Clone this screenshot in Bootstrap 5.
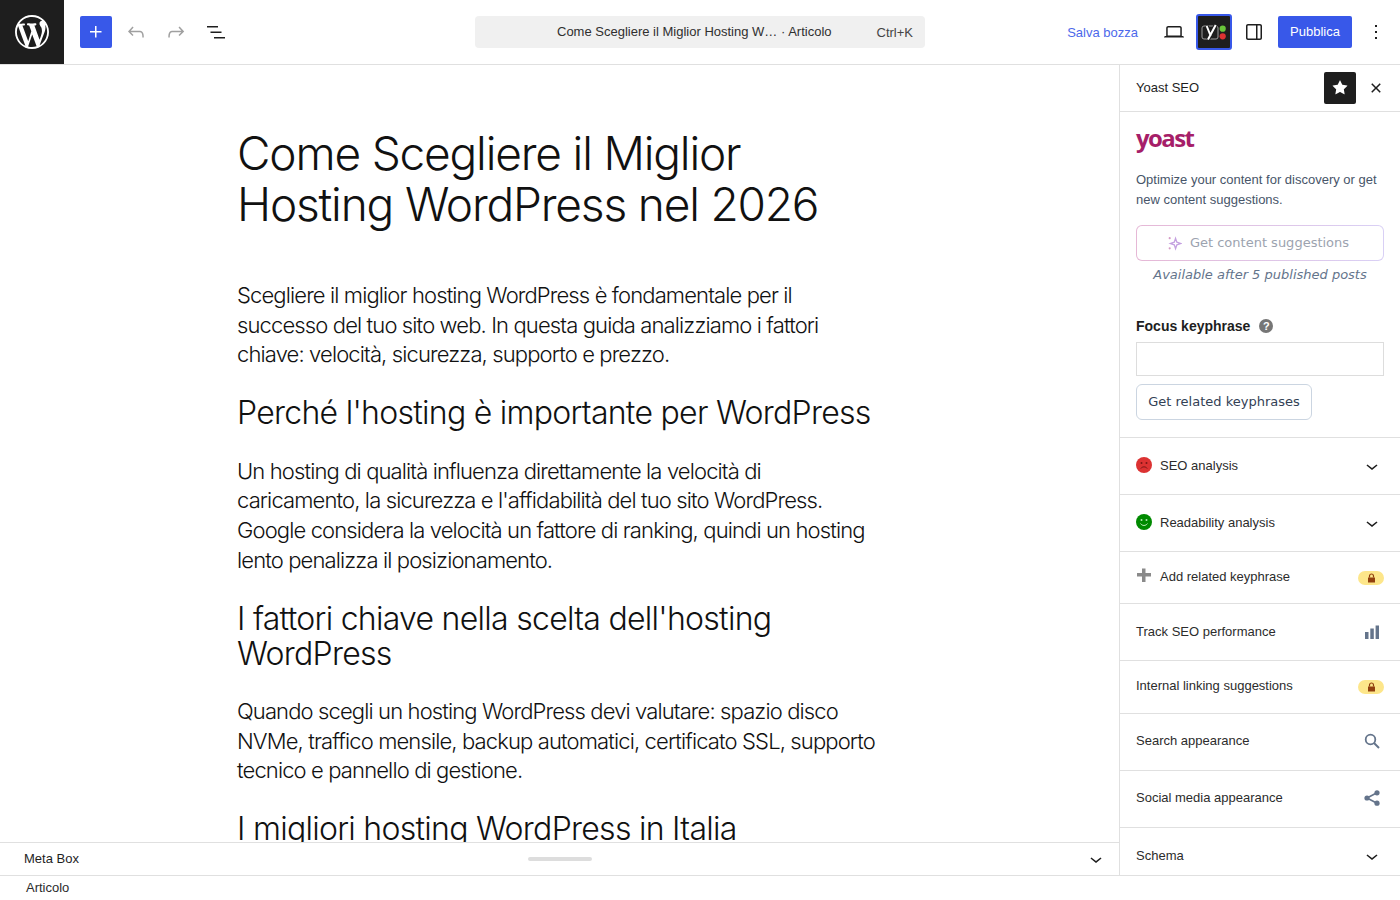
<!DOCTYPE html>
<html lang="it">
<head>
<meta charset="UTF-8" />
<title>Modifica articolo</title>
<link rel="stylesheet" href="https://cdn.jsdelivr.net/npm/bootstrap@5.3.3/dist/css/bootstrap.min.css" />
<style>
  html, body { height: 900px; overflow: hidden; }
  body { font-family: "Liberation Sans", Arial, sans-serif; font-size: 13px; color: #1e1e1e; background: #fff; }
  svg { display: block; fill: currentColor; }

  /* top bar */
  .top-bar { height: 65px; border-bottom: 1px solid #e0e0e0; }
  .wp-logo { width: 64px; height: 64px; background: #1e1e1e; color: #fff; }
  .tool-left { width: 411px; height: 64px; padding-left: 16px; }
  .tool-mid { height: 64px; }
  .btn-add { width: 32px; height: 32px; background: #3858e9; color: #fff; border-radius: 2px; }
  .tool-icon { width: 24px; height: 24px; color: #1e1e1e; }
  .tool-off { color: #a0a0a0; }
  .gap-12 { margin-left: 12px; }
  .gap-16 { margin-left: 16px; }
  .cmd-box { width: 450px; height: 32px; background: #f0f0f0; border-radius: 4px; padding: 0 12px 0 82px; color: #2f2f2f; }
  .cmd-key { color: #444; padding-top: 1px; }
  .tool-right { flex: 1; height: 64px; padding-right: 12px; }
  .save-link { color: #3858e9; margin-right: 24px; opacity: .9; padding-top: 1px; }
  .device-icon { margin-right: 10px; }
  .yoast-toggle { width: 36px; height: 36px; background: #1e1e1e; border: 2px solid #3858e9; border-radius: 3px; margin-right: 10px; }
  .panel-icon { margin-right: 12px; }
  .btn-publish { width: 74px; height: 32px; background: #3858e9; color: #fff; border-radius: 2px; margin-right: 12px; }

  /* editor */
  .work-area { height: 810px; }
  .canvas-wrap { flex: 1; min-width: 0; }
  .canvas-scroll { flex: 1; overflow: hidden; padding: 63px 0 0 237px; }
  .post-body { width: 645px; font-family: Inter, sans-serif; font-weight: 300; color: #111; }
  .post-title { font-size: 46px; line-height: 51px; font-weight: 300; letter-spacing: -1.17px; margin: 0 0 51px; }
  .post-body p { font-size: 22px; line-height: 29.6px; letter-spacing: -.87px; margin: 0 0 25.5px; }
  .post-body h2 { font-size: 32px; line-height: 35px; font-weight: 300; letter-spacing: -.72px; margin: 0 0 26.5px; }
  .meta-strip { height: 33px; border-top: 1px solid #e0e0e0; padding: 0 11px 0 24px; position: relative; }
  .drag-handle { position: absolute; left: 528px; top: 14px; width: 64px; height: 4px; border-radius: 2px; background: #ddd; }

  /* sidebar */
  .side-panel { width: 281px; border-left: 1px solid #e0e0e0; overflow: hidden; }
  .side-head { height: 47px; border-bottom: 1px solid #e0e0e0; padding: 0 12px 0 16px; }
  .pin-btn { width: 32px; height: 32px; background: #1e1e1e; color: #fff; border-radius: 2px; margin-right: 8px; }
  .yoast-pane { padding: 13px 16px 0; height: 325px; }
  .yoast-word { font-family: "Open Sans", sans-serif; font-weight: 700; font-size: 24px; line-height: 26px; letter-spacing: -1.6px; color: #a61e69; }
  .yoast-intro { color: #475569; line-height: 20px; margin: 19px 0 15px; }
  .ai-btn { height: 36px; padding-right: 4px; border: 1px solid transparent; border-radius: 6px; background: linear-gradient(#fff, #fff) padding-box, linear-gradient(90deg, #e6b8d6, #d9d0f5) border-box; font-family: "DejaVu Sans", sans-serif; color: #9ca3af; }
  .ai-note { font-family: "DejaVu Sans", sans-serif; font-style: italic; color: #64748b; text-align: center; margin-top: 5px; line-height: 18px; }
  .focus-label { font-size: 14px; font-weight: 700; color: #1e1e1e; margin-top: 32px; line-height: 20px; }
  .help-dot { width: 14px; height: 14px; border-radius: 50%; background: #767676; color: #fff; font-size: 11px; font-weight: 700; line-height: 14px; text-align: center; margin-left: 9px; }
  .focus-input { height: 34px; border: 1px solid #ddd; margin-top: 6px; }
  .related-btn { width: 176px; height: 36px; margin-top: 8px; border: 1px solid #cbd5e1; border-radius: 6px; font-family: "DejaVu Sans", sans-serif; color: #334155; }
  .seo-row { border-top: 1px solid #e0e0e0; padding: 0 16px; color: #2c2c2c; flex-shrink: 0; }
  .row-57 { height: 57px; }
  .row-lift { padding-bottom: 2px; }
  .row-52 { height: 52px; padding-bottom: 2px; }
  .row-53 { height: 53px; padding-bottom: 3px; }
  .row-48 { height: 47px; padding-top: 9px; }
  .face { width: 16px; height: 16px; margin-right: 8px; margin-top: -3px; }
  .row-chevron { width: 24px; height: 24px; color: #1e1e1e; }
  .row-icon { width: 18px; height: 18px; color: #64748b; margin-right: 3px; }
  .lock-pill { width: 26px; height: 14px; background: #fde68a; border-radius: 7px; margin-top: 3px; }

  /* footer */
  .foot-bar { height: 25px; border-top: 1px solid #e0e0e0; padding-left: 26px; color: #2c2c2c; }
</style>
</head>
<body>
  <header class="top-bar d-flex align-items-start">
    <div class="wp-logo d-flex align-items-center justify-content-center">
      <svg width="34" height="34" viewBox="0 0 20 20"><path d="M20 10c0-5.510-4.490-10-10-10C4.480 0 0 4.490 0 10c0 5.520 4.480 10 10 10 5.510 0 10-4.480 10-10zM7.780 15.370L4.370 6.220c.55-.02 1.170-.08 1.170-.08.5-.06.44-1.130-.06-1.110 0 0-1.450.11-2.370.11-.18 0-.37 0-.58-.01C4.120 2.690 6.870 1.110 10 1.110c2.330 0 4.450.87 6.050 2.340-.68-.11-1.650.39-1.650 1.580 0 .74.45 1.360.9 2.100.35.61.55 1.360.55 2.460 0 1.490-1.400 5-1.400 5l-3.030-8.370c.54-.02.82-.17.82-.17.5-.05.44-1.250-.06-1.220 0 0-1.440.12-2.380.12-.87 0-2.330-.12-2.330-.12-.5-.03-.56 1.200-.06 1.220l.92.08 1.260 3.410zM17.410 10c.24-.64.74-1.870.43-4.250.7 1.290 1.050 2.710 1.050 4.250 0 3.290-1.730 6.240-4.400 7.780.97-2.590 1.940-5.200 2.920-7.780zM6.100 18.090C3.120 16.650 1.110 13.530 1.110 10c0-1.300.23-2.480.72-3.590C3.250 10.300 4.670 14.200 6.100 18.090zm4.030-6.630l2.580 6.980c-.86.29-1.760.45-2.710.45-.79 0-1.570-.11-2.290-.33.81-2.380 1.620-4.740 2.420-7.100z"/></svg>
    </div>
    <div class="tool-left d-flex align-items-center">
      <div class="btn-add d-flex align-items-center justify-content-center">
        <svg width="24" height="24" viewBox="0 0 24 24"><path d="M11 12.500V17.500H12.500V12.500H17.500V11H12.500V6H11V11H6V12.500H11Z"/></svg>
      </div>
      <svg class="tool-icon tool-off gap-12" viewBox="0 0 24 24"><path d="M18.300 11.700c-.6-.6-1.400-.9-2.300-.9H6.700l2.900-3.300-1.100-1-4.500 5L8.500 16l1-1-2.700-2.700H16c.5 0 .9.2 1.300.5 1 1 1 3.400 1 4.500v.3h1.500v-.2c0-1.500 0-4.300-1.500-5.700z"/></svg>
      <svg class="tool-icon tool-off gap-16" viewBox="0 0 24 24"><path d="M15.600 6.500l-1.100 1 2.900 3.300H8c-.9 0-1.700.3-2.300.9-1.400 1.500-1.400 4.200-1.400 5.600v.2h1.500v-.3c0-1.100 0-3.500 1-4.500.3-.3.7-.5 1.300-.5h9.200L14.500 15l1.100 1.100 4.600-4.600-4.600-5z"/></svg>
      <svg class="tool-icon gap-16" viewBox="0 0 24 24"><path d="M3 6h11v1.500H3V6zm3.500 5.500h11V13h-11v-1.500zM21 17H10v1.500h11V17z"/></svg>
    </div>
    <div class="tool-mid d-flex align-items-center">
      <div class="cmd-box d-flex align-items-center justify-content-between">
        <span>Come Scegliere il Miglior Hosting W… · Articolo</span>
        <span class="cmd-key">Ctrl+K</span>
      </div>
    </div>
    <div class="tool-right d-flex align-items-center justify-content-end">
      <span class="save-link">Salva bozza</span>
      <svg class="tool-icon device-icon" viewBox="0 0 24 24"><path d="M20.500 16h-.7V8c0-1.100-.9-2-2-2H6.200c-1.100 0-2 .9-2 2v8h-.7c-.8 0-1.500.7-1.500 1.500h20c0-.8-.7-1.500-1.500-1.500zM5.700 8c0-.3.2-.5.5-.5h11.600c.3 0 .5.2.5.5v7.600H5.700V8z"/></svg>
      <div class="yoast-toggle d-flex align-items-center justify-content-center">
        <svg width="30" height="30" viewBox="0 0 30 30">
          <rect x="3" y="9" width="16" height="13" rx="2" fill="none" stroke="#9a9a9a" stroke-width="1"/>
          <path d="M7.700 9l4 10M16.700 8L9 22.500" fill="none" stroke="#1e1e1e" stroke-width="4"/>
          <path d="M7.700 9l4 10M16.700 8L9 22.500" fill="none" stroke="#fff" stroke-width="2"/>
          <circle cx="23.700" cy="11.700" r="3.100" fill="#6ac53a"/>
          <circle cx="23.700" cy="19.300" r="3.100" fill="#dc3232"/>
        </svg>
      </div>
      <svg class="tool-icon panel-icon" viewBox="0 0 24 24"><path d="M18 4H6c-1.100 0-2 .9-2 2v12c0 1.100.9 2 2 2h12c1.100 0 2-.9 2-2V6c0-1.100-.9-2-2-2zm-4 14.500H6c-.3 0-.5-.2-.5-.5V6c0-.3.2-.5.5-.5h8v13zm4.500-.5c0 .3-.2.5-.5.5h-2.500v-13H18c.3 0 .5.2.5.5v12z"/></svg>
      <div class="btn-publish d-flex align-items-center justify-content-center">Pubblica</div>
      <svg class="tool-icon" viewBox="0 0 24 24"><path d="M13 19h-2v-2h2v2zm0-6h-2v-2h2v2zm0-6h-2V5h2v2z"/></svg>
    </div>
  </header>

  <div class="work-area d-flex">
    <div class="canvas-wrap d-flex flex-column">
      <main class="canvas-scroll">
        <article class="post-body">
          <h1 class="post-title">Come Scegliere il Miglior Hosting WordPress nel 2026</h1>
          <p>Scegliere il miglior hosting WordPress è fondamentale per il successo del tuo sito web. In questa guida analizziamo i fattori chiave: velocità, sicurezza, supporto e prezzo.</p>
          <h2>Perché l'hosting è importante per WordPress</h2>
          <p>Un hosting di qualità influenza direttamente la velocità di caricamento, la sicurezza e l'affidabilità del tuo sito WordPress. Google considera la velocità un fattore di ranking, quindi un hosting lento penalizza il posizionamento.</p>
          <h2>I fattori chiave nella scelta dell'hosting WordPress</h2>
          <p>Quando scegli un hosting WordPress devi valutare: spazio disco NVMe, traffico mensile, backup automatici, certificato SSL, supporto tecnico e pannello di gestione.</p>
          <h2>I migliori hosting WordPress in Italia</h2>
        </article>
      </main>
      <div class="meta-strip d-flex align-items-center justify-content-between">
        <span>Meta Box</span>
        <span class="drag-handle"></span>
        <svg class="tool-icon" viewBox="0 0 24 24"><path d="M17.500 11.600L12 16l-5.500-4.400.9-1.200L12 14l4.500-3.600 1 1.200z"/></svg>
      </div>
    </div>

    <aside class="side-panel d-flex flex-column">
      <div class="side-head d-flex align-items-center flex-shrink-0">
        <span class="me-auto">Yoast SEO</span>
        <div class="pin-btn d-flex align-items-center justify-content-center">
          <svg width="24" height="24" viewBox="0 0 24 24"><path d="M11.776 4.454a.25.25 0 01.448 0l2.069 4.192a.25.25 0 00.188.137l4.626.672a.25.25 0 01.139.426l-3.348 3.263a.25.25 0 00-.072.222l.79 4.607a.25.25 0 01-.362.263l-4.138-2.175a.25.25 0 00-.232 0l-4.138 2.175a.25.25 0 01-.363-.263l.79-4.607a.25.25 0 00-.071-.222L4.754 9.881a.25.25 0 01.139-.426l4.626-.672a.25.25 0 00.188-.137l2.069-4.192z"/></svg>
        </div>
        <svg class="tool-icon" viewBox="0 0 24 24"><path d="M12 13.060l3.712 3.713 1.061-1.060L13.061 12l3.712-3.712-1.060-1.060L12 10.938 8.288 7.227l-1.061 1.060L10.939 12l-3.712 3.712 1.060 1.061L12 13.061z"/></svg>
      </div>

      <section class="yoast-pane flex-shrink-0">
        <div class="yoast-word">yoast</div>
        <p class="yoast-intro">Optimize your content for discovery or get new content suggestions.</p>
        <div class="ai-btn d-flex align-items-center justify-content-center gap-2">
          <svg width="15" height="15" viewBox="0 0 14 14">
            <path d="M8 2.200l1.200 3.600L12.800 7 9.200 8.200 8 11.800 6.800 8.200 3.200 7l3.600-1.200z" fill="none" stroke="#c4a0e0" stroke-width="1.200"/>
            <circle cx="2.500" cy="2" r="1" fill="#d59ac6"/>
            <circle cx="2.500" cy="11.500" r="1" fill="#d59ac6"/>
          </svg>
          <span>Get content suggestions</span>
        </div>
        <div class="ai-note">Available after 5 published posts</div>
        <div class="focus-label d-flex align-items-center">Focus keyphrase <span class="help-dot">?</span></div>
        <div class="focus-input"></div>
        <div class="related-btn d-flex align-items-center justify-content-center">Get related keyphrases</div>
      </section>

      <div class="seo-row row-57 d-flex align-items-center">
        <svg class="face" viewBox="0 0 16 16"><circle cx="8" cy="8" r="8" fill="#dc3232"/><circle cx="5.500" cy="6" r="1" fill="#7a1515"/><circle cx="10.500" cy="6" r="1" fill="#7a1515"/><path d="M4.800 11.500c1.500-2.200 4.900-2.200 6.400 0" fill="none" stroke="#7a1515" stroke-width="1"/></svg>
        <span class="me-auto">SEO analysis</span>
        <svg class="row-chevron" viewBox="0 0 24 24"><path d="M17.500 11.600L12 16l-5.500-4.400.9-1.200L12 14l4.500-3.600 1 1.200z"/></svg>
      </div>
      <div class="seo-row row-57 d-flex align-items-center">
        <svg class="face" viewBox="0 0 16 16"><circle cx="8" cy="8" r="8" fill="#008a00"/><circle cx="5.500" cy="6" r="1" fill="#b5e8b5"/><circle cx="10.500" cy="6" r="1" fill="#b5e8b5"/><path d="M4.500 9.500c1.500 2.600 5.500 2.600 7 0" fill="none" stroke="#b5e8b5" stroke-width="1"/></svg>
        <span class="me-auto">Readability analysis</span>
        <svg class="row-chevron" viewBox="0 0 24 24"><path d="M17.500 11.600L12 16l-5.500-4.400.9-1.200L12 14l4.500-3.600 1 1.200z"/></svg>
      </div>
      <div class="seo-row row-52 d-flex align-items-center">
        <svg class="face" viewBox="0 0 16 16"><path d="M6 1.500h3.500V6H15v3.500H9.500V15H6V9.500H1V6h5z" fill="#8a8a8a"/></svg>
        <span class="me-auto">Add related keyphrase</span>
        <span class="lock-pill d-flex align-items-center justify-content-center">
          <svg width="9" height="10" viewBox="0 0 9 10"><path d="M1 4.500h7V9.500H1z" fill="#92400e"/><path d="M2.500 4.500V3a2 2 0 014 0v1.500" fill="none" stroke="#92400e" stroke-width="1.200"/></svg>
        </span>
      </div>
      <div class="seo-row row-57 d-flex align-items-center">
        <span class="me-auto">Track SEO performance</span>
        <svg class="row-icon" viewBox="0 0 18 18"><path d="M2 9h3.500v7H2zM7.300 5.500h3.500V16H7.300zM12.600 2.500H16V16h-3.400z"/></svg>
      </div>
      <div class="seo-row row-53 d-flex align-items-center">
        <span class="me-auto">Internal linking suggestions</span>
        <span class="lock-pill d-flex align-items-center justify-content-center">
          <svg width="9" height="10" viewBox="0 0 9 10"><path d="M1 4.500h7V9.500H1z" fill="#92400e"/><path d="M2.500 4.500V3a2 2 0 014 0v1.500" fill="none" stroke="#92400e" stroke-width="1.200"/></svg>
        </span>
      </div>
      <div class="seo-row row-57 row-lift d-flex align-items-center">
        <span class="me-auto">Search appearance</span>
        <svg class="row-icon" viewBox="0 0 18 18"><circle cx="7.500" cy="7.500" r="4.800" fill="none" stroke="currentColor" stroke-width="1.800"/><path d="M11 11l5 5" stroke="currentColor" stroke-width="2" fill="none"/></svg>
      </div>
      <div class="seo-row row-57 row-lift d-flex align-items-center">
        <span class="me-auto">Social media appearance</span>
        <svg class="row-icon" viewBox="0 0 18 18"><circle cx="4" cy="9" r="2.600"/><circle cx="14" cy="3.800" r="2.600"/><circle cx="14" cy="14.200" r="2.600"/><path d="M4 9l10-5.200M4 9l10 5.200" stroke="currentColor" stroke-width="1.600"/></svg>
      </div>
      <div class="seo-row row-48 d-flex align-items-center">
        <span class="me-auto">Schema</span>
        <svg class="row-chevron" viewBox="0 0 24 24"><path d="M17.500 11.600L12 16l-5.500-4.400.9-1.200L12 14l4.500-3.600 1 1.200z"/></svg>
      </div>
    </aside>
  </div>

  <footer class="foot-bar d-flex align-items-center">Articolo</footer>
  <script src="https://cdn.jsdelivr.net/npm/bootstrap@5.3.3/dist/js/bootstrap.bundle.min.js"></script>
</body>
</html>
